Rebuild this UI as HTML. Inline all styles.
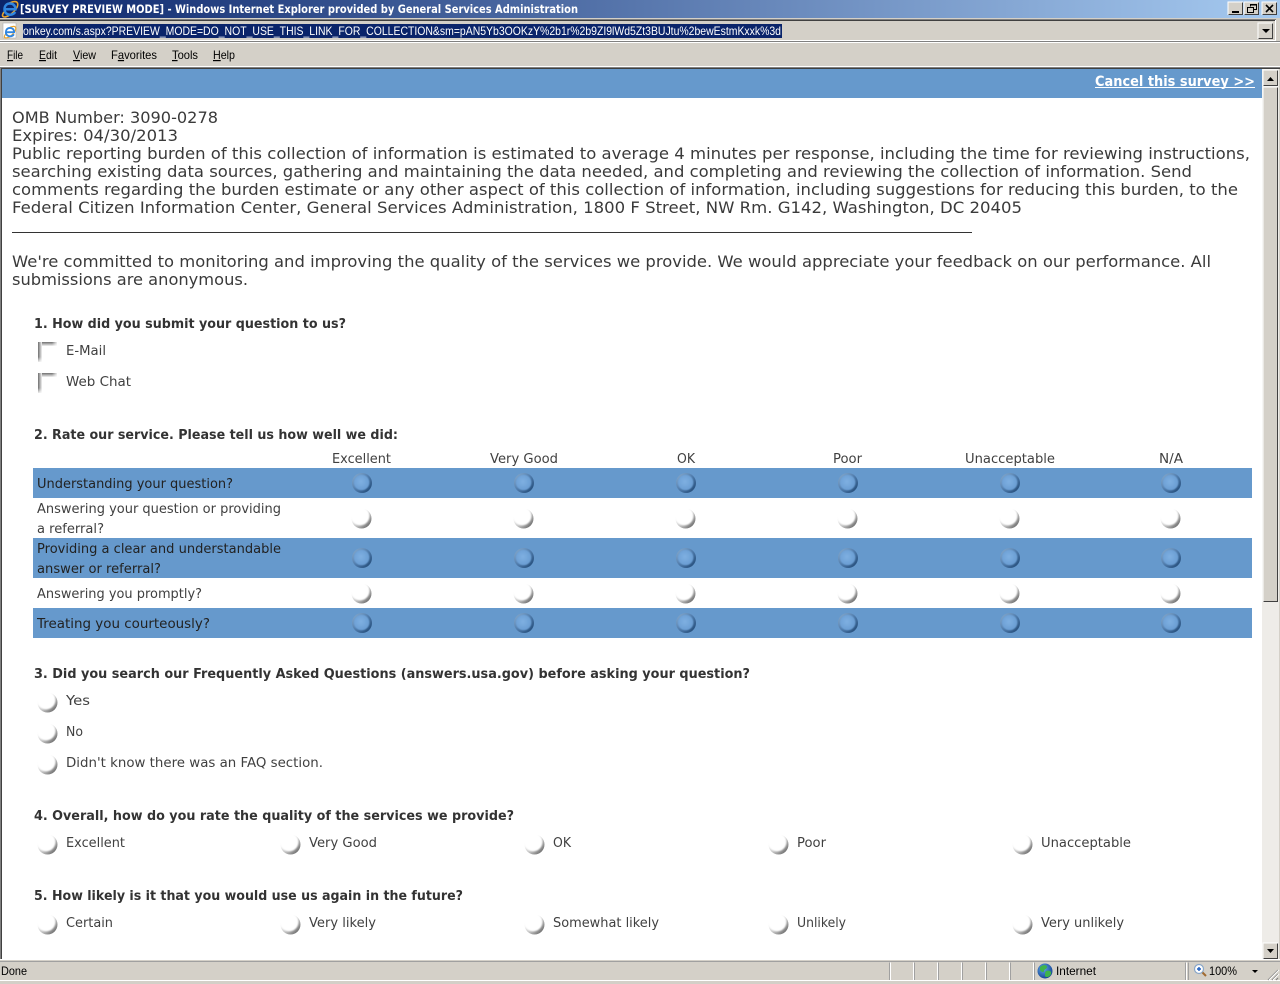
<!DOCTYPE html>
<html><head><meta charset="utf-8"><title>Survey</title>
<style>
html,body{margin:0;padding:0;background:#fff;width:1280px;height:984px;overflow:hidden}
svg{display:block}
.b{font-family:"DejaVu Sans",sans-serif;font-size:16px;fill:#3a3a3a}
.s{font-family:"DejaVu Sans",sans-serif;font-size:13px;fill:#404040}
.q{font-family:"DejaVu Sans",sans-serif;font-size:13px;font-weight:bold;fill:#333}
.r{font-family:"DejaVu Sans",sans-serif;font-size:13px;fill:#222}
.u{font-family:"Liberation Sans",sans-serif;font-size:12px;fill:#000}
</style></head><body>
<svg width="1280" height="984" viewBox="0 0 1280 984" xmlns="http://www.w3.org/2000/svg">
<defs>
<linearGradient id="tb" x1="0" x2="1" y1="0" y2="0"><stop offset="0" stop-color="#0a246a"/><stop offset="1" stop-color="#a6caf0"/></linearGradient>
<linearGradient id="cg" x1="0" y1="0" x2="1" y2="1"><stop offset="0.25" stop-color="#f0f0f0"/><stop offset="0.55" stop-color="#c4c4c4"/><stop offset="1" stop-color="#505050"/></linearGradient>
<linearGradient id="bg" x1="0" y1="0" x2="1" y2="1"><stop offset="0" stop-color="#8fb0d0"/><stop offset="0.5" stop-color="#4f7bab"/><stop offset="1" stop-color="#1a426e"/></linearGradient>
<radialGradient id="bi" cx="0.45" cy="0.45" r="0.7"><stop offset="0" stop-color="#7fb0e2"/><stop offset="0.7" stop-color="#6c9fd4"/><stop offset="1" stop-color="#6595c6"/></radialGradient>
<linearGradient id="chT" x1="0" y1="0" x2="0" y2="1"><stop offset="0" stop-color="#6e6e6e"/><stop offset="1" stop-color="#f2f2f2"/></linearGradient>
<linearGradient id="chL" x1="0" y1="0" x2="1" y2="0"><stop offset="0" stop-color="#6e6e6e"/><stop offset="1" stop-color="#f2f2f2"/></linearGradient>
<linearGradient id="fadeH" x1="0" y1="0" x2="1" y2="0"><stop offset="0" stop-color="#fff" stop-opacity="0"/><stop offset="1" stop-color="#fff" stop-opacity="0.85"/></linearGradient>
<linearGradient id="fadeV" x1="0" y1="0" x2="0" y2="1"><stop offset="0" stop-color="#fff" stop-opacity="0"/><stop offset="1" stop-color="#fff" stop-opacity="0.85"/></linearGradient>
<radialGradient id="gl" cx="0.4" cy="0.35" r="0.7"><stop offset="0" stop-color="#5fa8e8"/><stop offset="1" stop-color="#123f90"/></radialGradient>
<filter id="bl" x="-30%" y="-30%" width="160%" height="160%"><feGaussianBlur stdDeviation="0.8"/></filter>
<filter id="bs" x="-30%" y="-30%" width="160%" height="160%"><feGaussianBlur stdDeviation="0.6"/></filter>
<g id="w"><circle cx="-0.5" cy="0.5" r="10" fill="url(#cg)"/><circle cx="-2" cy="-2" r="9.4" fill="#fff" filter="url(#bl)"/></g>
<g id="d"><circle cx="0" cy="0" r="10" fill="url(#bg)"/><circle cx="-0.4" cy="-0.5" r="7.8" fill="url(#bi)" filter="url(#bs)"/></g>
<g id="c"><rect x="0" y="0" width="19" height="4" fill="url(#chT)"/><rect x="0" y="0" width="4" height="20" fill="url(#chL)"/><rect x="14" y="0" width="5" height="4" fill="url(#fadeH)"/><rect x="0" y="15" width="4" height="5" fill="url(#fadeV)"/></g>
<g id="ie"><path d="M-6 3C-9.5 7.5 -6.5 9.5 -1 6.5C4 3.5 9 -2.5 7.5 -6C6.5 -8.5 2 -7.5 -2.5 -5" fill="none" stroke="#eaa52a" stroke-width="1.6"/><path d="M-5.5 .3H5.5C5.5 -3.5 3 -5.5 0 -5.5C-3.5 -5.5 -5.5 -3 -5.5 .3C-5.5 3.8 -3 5.7 0 5.7C2.4 5.7 4.2 4.7 5.2 3" fill="none" stroke="#2f86e0" stroke-width="2.5"/></g>
</defs>

<!-- Chrome -->
<rect width="1280" height="984" fill="#d4d0c8"/>
<rect x="0" y="0" width="1280" height="18" fill="url(#tb)"/>
<use href="#ie" x="10" y="9"/>
<text x="20" y="13" textLength="558" lengthAdjust="spacingAndGlyphs" font-family="DejaVu Sans,sans-serif" font-size="11.5" font-weight="bold" fill="#fff">[SURVEY PREVIEW MODE] - Windows Internet Explorer provided by General Services Administration</text>

<!-- window buttons -->
<g>
<rect x="1228" y="2" width="15" height="13" fill="#d4d0c8" stroke="none"/><path d="M1228 15V2H1243M1228 15" fill="none" stroke="#fff"/><path d="M1228.5 14.5H1242.5V2.5" fill="none" stroke="#404040"/>
<rect x="1232" y="11" width="7" height="2" fill="#000"/>
<rect x="1244" y="2" width="15" height="13" fill="#d4d0c8"/><path d="M1244 15V2H1259" fill="none" stroke="#fff"/><path d="M1244.5 14.5H1258.5V2.5" fill="none" stroke="#404040"/>
<path d="M1250.5 6.5V4.5H1256.5V9.5H1254M1247.5 7.5H1253.5V12.5H1247.5Z" fill="none" stroke="#000"/><path d="M1250 5H1257M1247 7.5H1254" stroke="#000"/>
<rect x="1262" y="2" width="15" height="13" fill="#d4d0c8"/><path d="M1262 15V2H1277" fill="none" stroke="#fff"/><path d="M1262.5 14.5H1276.5V2.5" fill="none" stroke="#404040"/>
<path d="M1266 5L1273 12M1273 5L1266 12" stroke="#000" stroke-width="1.6"/>
</g>

<!-- address bar -->
<rect x="0" y="18" width="1280" height="1" fill="#d4d0c8"/>
<rect x="0" y="19" width="1276" height="1" fill="#808080"/>
<rect x="0" y="20" width="1276" height="1" fill="#404040"/>
<rect x="1275" y="20" width="1" height="20" fill="#fff"/>
<rect x="0" y="40" width="1276" height="1" fill="#fff"/>
<rect x="0" y="41" width="1280" height="1" fill="#808080"/>
<rect x="0" y="42" width="1280" height="1" fill="#fff"/>
<rect x="3" y="23" width="13" height="15" fill="#fff" stroke="#b0b0b0" stroke-width=".6"/>
<g transform="translate(10,32) scale(.75)"><use href="#ie"/></g>
<rect x="23" y="24" width="759" height="14" fill="#0a246a"/>
<text x="23" y="35" textLength="758" lengthAdjust="spacingAndGlyphs" font-family="Liberation Sans,sans-serif" font-size="12" fill="#fff">onkey.com/s.aspx?PREVIEW_MODE=DO_NOT_USE_THIS_LINK_FOR_COLLECTION&amp;sm=pAN5Yb3OOKzY%2b1r%2b9ZI9lWd5Zt3BUJtu%2bewEstmKxxk%3d</text>
<rect x="1258" y="23" width="15" height="16" fill="#d4d0c8"/><path d="M1258 39V23H1273" fill="none" stroke="#fff"/><path d="M1258.5 38.5H1272.5V23.5" fill="none" stroke="#404040"/>
<path d="M1262 29H1270L1266 33Z" fill="#000"/>

<!-- menu -->
<g class="u">
<text class="u" x="7" y="59" textLength="16" lengthAdjust="spacingAndGlyphs"><tspan text-decoration="underline">F</tspan>ile</text>
<text class="u" x="39" y="59" textLength="18" lengthAdjust="spacingAndGlyphs"><tspan text-decoration="underline">E</tspan>dit</text>
<text class="u" x="73" y="59" textLength="23" lengthAdjust="spacingAndGlyphs"><tspan text-decoration="underline">V</tspan>iew</text>
<text class="u" x="111" y="59" textLength="46" lengthAdjust="spacingAndGlyphs">F<tspan text-decoration="underline">a</tspan>vorites</text>
<text class="u" x="172" y="59" textLength="26" lengthAdjust="spacingAndGlyphs"><tspan text-decoration="underline">T</tspan>ools</text>
<text class="u" x="213" y="59" textLength="22" lengthAdjust="spacingAndGlyphs"><tspan text-decoration="underline">H</tspan>elp</text>
</g>

<!-- page frame -->
<rect x="0" y="66" width="1280" height="1" fill="#fff"/>
<rect x="0" y="67" width="1280" height="1" fill="#808080"/>
<rect x="0" y="68" width="1280" height="1" fill="#404040"/>
<rect x="0" y="68" width="1" height="892" fill="#808080"/>
<rect x="1" y="68" width="1" height="892" fill="#404040"/>
<rect x="2" y="69" width="1260" height="890" fill="#fff"/>
<rect x="2" y="69" width="1260" height="29" fill="#6699cc"/>
<text x="1095" y="86" textLength="160" lengthAdjust="spacingAndGlyphs" font-family="DejaVu Sans,sans-serif" font-size="14" font-weight="bold" fill="#fff">Cancel this survey &gt;&gt;</text>
<rect x="1095" y="87" width="160" height="1" fill="#fff"/>

<!-- scrollbar -->
<rect x="1262" y="69" width="17" height="890" fill="#eeece8"/>
<rect x="1263" y="70" width="15" height="16" fill="#d4d0c8"/><path d="M1263 86V70H1278" fill="none" stroke="#fff"/><path d="M1263.5 85.5H1277.5V70.5" fill="none" stroke="#404040"/>
<path d="M1267 81H1274L1270.5 77Z" fill="#000"/>
<rect x="1263" y="87" width="15" height="515" fill="#d4d0c8"/><path d="M1263 602V87H1278" fill="none" stroke="#fff"/><path d="M1263.5 601.5H1277.5V87.5" fill="none" stroke="#404040"/>
<rect x="1263" y="943" width="15" height="16" fill="#d4d0c8"/><path d="M1263 959V943H1278" fill="none" stroke="#fff"/><path d="M1263.5 958.5H1277.5V943.5" fill="none" stroke="#404040"/>
<path d="M1267 949H1274L1270.5 953Z" fill="#000"/>

<!-- intro text -->
<text class="b" x="12" y="123" textLength="206" lengthAdjust="spacingAndGlyphs">OMB Number: 3090-0278</text>
<text class="b" x="12" y="141" textLength="166" lengthAdjust="spacingAndGlyphs">Expires: 04/30/2013</text>
<text class="b" x="12" y="159" textLength="1238" lengthAdjust="spacingAndGlyphs">Public reporting burden of this collection of information is estimated to average 4 minutes per response, including the time for reviewing instructions,</text>
<text class="b" x="12" y="177" textLength="1180" lengthAdjust="spacingAndGlyphs">searching existing data sources, gathering and maintaining the data needed, and completing and reviewing the collection of information. Send</text>
<text class="b" x="12" y="195" textLength="1226" lengthAdjust="spacingAndGlyphs">comments regarding the burden estimate or any other aspect of this collection of information, including suggestions for reducing this burden, to the</text>
<text class="b" x="12" y="213" textLength="1010" lengthAdjust="spacingAndGlyphs">Federal Citizen Information Center, General Services Administration, 1800 F Street, NW Rm. G142, Washington, DC 20405</text>
<rect x="12" y="232" width="960" height="1" fill="#333"/>
<text class="b" x="12" y="267" textLength="1199" lengthAdjust="spacingAndGlyphs">We're committed to monitoring and improving the quality of the services we provide. We would appreciate your feedback on our performance. All</text>
<text class="b" x="12" y="285" textLength="236" lengthAdjust="spacingAndGlyphs">submissions are anonymous.</text>

<!-- Q1 -->
<text class="q" x="34" y="328" textLength="312" lengthAdjust="spacingAndGlyphs">1. How did you submit your question to us?</text>
<use href="#c" x="38" y="342"/>
<text class="s" x="66" y="355" textLength="40" lengthAdjust="spacingAndGlyphs">E-Mail</text>
<use href="#c" x="38" y="373"/>
<text class="s" x="66" y="386" textLength="65" lengthAdjust="spacingAndGlyphs">Web Chat</text>

<!-- Q2 -->
<text class="q" x="34" y="439" textLength="364" lengthAdjust="spacingAndGlyphs">2. Rate our service. Please tell us how well we did:</text>
<text class="s" x="332" y="463" textLength="59" lengthAdjust="spacingAndGlyphs">Excellent</text>
<text class="s" x="490" y="463" textLength="68" lengthAdjust="spacingAndGlyphs">Very Good</text>
<text class="s" x="677" y="463" textLength="18" lengthAdjust="spacingAndGlyphs">OK</text>
<text class="s" x="833" y="463" textLength="29" lengthAdjust="spacingAndGlyphs">Poor</text>
<text class="s" x="965" y="463" textLength="90" lengthAdjust="spacingAndGlyphs">Unacceptable</text>
<text class="s" x="1159" y="463" textLength="24" lengthAdjust="spacingAndGlyphs">N/A</text>
<rect x="33" y="468" width="1219" height="30" fill="#6699cc"/>
<rect x="33" y="538" width="1219" height="40" fill="#6699cc"/>
<rect x="33" y="608" width="1219" height="30" fill="#6699cc"/>
<text class="r" x="37" y="488" textLength="196" lengthAdjust="spacingAndGlyphs">Understanding your question?</text>
<text class="s" x="37" y="513" textLength="244" lengthAdjust="spacingAndGlyphs">Answering your question or providing</text>
<text class="s" x="37" y="533" textLength="67" lengthAdjust="spacingAndGlyphs">a referral?</text>
<text class="r" x="37" y="553" textLength="244" lengthAdjust="spacingAndGlyphs">Providing a clear and understandable</text>
<text class="r" x="37" y="573" textLength="124" lengthAdjust="spacingAndGlyphs">answer or referral?</text>
<text class="s" x="37" y="598" textLength="165" lengthAdjust="spacingAndGlyphs">Answering you promptly?</text>
<text class="r" x="37" y="628" textLength="173" lengthAdjust="spacingAndGlyphs">Treating you courteously?</text>

<use href="#d" x="362" y="483"/><use href="#d" x="524" y="483"/><use href="#d" x="686" y="483"/><use href="#d" x="848" y="483"/><use href="#d" x="1010" y="483"/><use href="#d" x="1171" y="483"/>
<use href="#w" x="362" y="518"/><use href="#w" x="524" y="518"/><use href="#w" x="686" y="518"/><use href="#w" x="848" y="518"/><use href="#w" x="1010" y="518"/><use href="#w" x="1171" y="518"/>
<use href="#d" x="362" y="558"/><use href="#d" x="524" y="558"/><use href="#d" x="686" y="558"/><use href="#d" x="848" y="558"/><use href="#d" x="1010" y="558"/><use href="#d" x="1171" y="558"/>
<use href="#w" x="362" y="593"/><use href="#w" x="524" y="593"/><use href="#w" x="686" y="593"/><use href="#w" x="848" y="593"/><use href="#w" x="1010" y="593"/><use href="#w" x="1171" y="593"/>
<use href="#d" x="362" y="623"/><use href="#d" x="524" y="623"/><use href="#d" x="686" y="623"/><use href="#d" x="848" y="623"/><use href="#d" x="1010" y="623"/><use href="#d" x="1171" y="623"/>

<!-- Q3 -->
<text class="q" x="34" y="678" textLength="716" lengthAdjust="spacingAndGlyphs">3. Did you search our Frequently Asked Questions (answers.usa.gov) before asking your question?</text>
<use href="#w" x="48" y="702"/><text class="s" x="66" y="705" textLength="24" lengthAdjust="spacingAndGlyphs">Yes</text>
<use href="#w" x="48" y="733"/><text class="s" x="66" y="736" textLength="17" lengthAdjust="spacingAndGlyphs">No</text>
<use href="#w" x="48" y="764"/><text class="s" x="66" y="767" textLength="257" lengthAdjust="spacingAndGlyphs">Didn't know there was an FAQ section.</text>

<!-- Q4 -->
<text class="q" x="34" y="820" textLength="480" lengthAdjust="spacingAndGlyphs">4. Overall, how do you rate the quality of the services we provide?</text>
<use href="#w" x="48" y="844"/><text class="s" x="66" y="847" textLength="59" lengthAdjust="spacingAndGlyphs">Excellent</text>
<use href="#w" x="291" y="844"/><text class="s" x="309" y="847" textLength="68" lengthAdjust="spacingAndGlyphs">Very Good</text>
<use href="#w" x="535" y="844"/><text class="s" x="553" y="847" textLength="18" lengthAdjust="spacingAndGlyphs">OK</text>
<use href="#w" x="779" y="844"/><text class="s" x="797" y="847" textLength="29" lengthAdjust="spacingAndGlyphs">Poor</text>
<use href="#w" x="1023" y="844"/><text class="s" x="1041" y="847" textLength="90" lengthAdjust="spacingAndGlyphs">Unacceptable</text>

<!-- Q5 -->
<text class="q" x="34" y="900" textLength="429" lengthAdjust="spacingAndGlyphs">5. How likely is it that you would use us again in the future?</text>
<use href="#w" x="48" y="924"/><text class="s" x="66" y="927" textLength="47" lengthAdjust="spacingAndGlyphs">Certain</text>
<use href="#w" x="291" y="924"/><text class="s" x="309" y="927" textLength="67" lengthAdjust="spacingAndGlyphs">Very likely</text>
<use href="#w" x="535" y="924"/><text class="s" x="553" y="927" textLength="106" lengthAdjust="spacingAndGlyphs">Somewhat likely</text>
<use href="#w" x="779" y="924"/><text class="s" x="797" y="927" textLength="49" lengthAdjust="spacingAndGlyphs">Unlikely</text>
<use href="#w" x="1023" y="924"/><text class="s" x="1041" y="927" textLength="83" lengthAdjust="spacingAndGlyphs">Very unlikely</text>

<!-- status bar -->
<rect x="0" y="959" width="1280" height="25" fill="#d4d0c8"/>
<rect x="0" y="959" width="1280" height="1" fill="#fff"/>
<rect x="0" y="961" width="1280" height="1" fill="#a0a0a0"/>
<rect x="0" y="980" width="1280" height="1" fill="#fff"/>
<text x="1" y="975" textLength="26" lengthAdjust="spacingAndGlyphs" font-family="Liberation Sans,sans-serif" font-size="12" fill="#000">Done</text>
<g fill="none">
<path d="M889.5 980V962.5" stroke="#a0a0a0"/><path d="M890.5 980V962.5" stroke="#fff"/>
<path d="M913.5 980V962.5" stroke="#fff"/><path d="M914.5 980V962.5" stroke="#a0a0a0"/>
<path d="M937.5 980V962.5" stroke="#fff"/><path d="M938.5 980V962.5" stroke="#a0a0a0"/>
<path d="M961.5 980V962.5" stroke="#fff"/><path d="M962.5 980V962.5" stroke="#a0a0a0"/>
<path d="M985.5 980V962.5" stroke="#fff"/><path d="M986.5 980V962.5" stroke="#a0a0a0"/>
<path d="M1009.5 980V962.5" stroke="#fff"/><path d="M1010.5 980V962.5" stroke="#a0a0a0"/>
<path d="M1033.5 980V962.5" stroke="#fff"/><path d="M1034.5 980V962.5" stroke="#a0a0a0"/>
<path d="M1185.5 980V962.5" stroke="#a0a0a0"/><path d="M1186.5 980V962.5" stroke="#fff"/>
<path d="M1188.5 980V962.5" stroke="#a0a0a0"/>
</g>
<circle cx="1045" cy="971" r="7.5" fill="url(#gl)"/>
<path d="M1040 967C1043 964 1047 965 1047 967C1047 969 1044 969 1044 971C1044 973 1041 972 1040 970ZM1046 971C1049 970 1052 971 1051 974C1050 977 1046 978 1045 976C1045 974 1045 972 1046 971Z" fill="#3fb44a"/>
<text x="1056" y="975" textLength="40" lengthAdjust="spacingAndGlyphs" font-family="Liberation Sans,sans-serif" font-size="12" fill="#000">Internet</text>
<circle cx="1199" cy="969" r="4.5" fill="#fff" stroke="#8aa7c8" stroke-width="1.2"/>
<path d="M1197 969H1201M1199 967V971" stroke="#1f5fc0" stroke-width="1.4"/>
<path d="M1202.5 972.5L1206 976" stroke="#a06a30" stroke-width="2"/>
<text x="1209" y="975" textLength="28" lengthAdjust="spacingAndGlyphs" font-family="Liberation Sans,sans-serif" font-size="12" fill="#000">100%</text>
<path d="M1252 970H1258L1255 973Z" fill="#000"/>
<path d="M1268 980L1278 970M1272 980L1278 974M1276 980L1278 978" stroke="#808080"/>
<path d="M1269 980L1279 970M1273 980L1279 974" stroke="#fff"/>
</svg>
</body></html>
